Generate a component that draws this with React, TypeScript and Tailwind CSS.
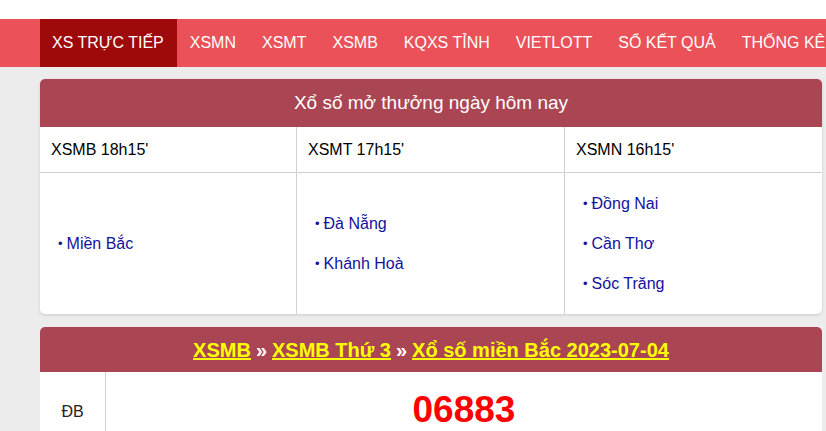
import React from 'react'

const navItems = ['XS TRỰC TIẾP', 'XSMN', 'XSMT', 'XSMB', 'KQXS TỈNH', 'VIETLOTT', 'SỔ KẾT QUẢ', 'THỐNG KÊ']

const schedule = [
  { title: "XSMB 18h15'", items: ['Miền Bắc'] },
  { title: "XSMT 17h15'", items: ['Đà Nẵng', 'Khánh Hoà'] },
  { title: "XSMN 16h15'", items: ['Đồng Nai', 'Cần Thơ', 'Sóc Trăng'] },
]

export default function App() {
  return (
    <div className="min-h-[431px] bg-[#ececec] font-['Liberation_Sans',Arial,sans-serif] overflow-hidden">
      {/* thanh trên cùng */}
      <div className="h-[19px] bg-white" />

      {/* menu */}
      <nav className="h-12 bg-[#ea5159] pl-10 flex whitespace-nowrap overflow-hidden">
        {navItems.map((item, i) => (
          <a
            key={item}
            href="#"
            className={`flex items-center px-[13px] text-base text-white ${i === 0 ? 'bg-[#9e0a0a] pl-3' : ''}`}
          >
            {item}
          </a>
        ))}
      </nav>

      <div className="pl-10 pr-1 pt-3">
        {/* lịch mở thưởng hôm nay */}
        <div className="bg-white rounded-[5px] overflow-hidden shadow-[0_1px_3px_rgba(0,0,0,0.15)]">
          <div className="h-12 bg-[#aa4553] text-white text-[19px] flex items-center justify-center">
            Xổ số mở thưởng ngày hôm nay
          </div>
          <div className="grid grid-cols-[256px_268px_1fr]">
            {schedule.map((col, i) => (
              <div
                key={col.title}
                className={`h-[46px] flex items-center px-[11px] text-base text-black border-b border-[#d0d0d0] ${i > 0 ? 'border-l' : ''}`}
              >
                {col.title}
              </div>
            ))}
            {schedule.map((col, i) => (
              <div
                key={col.title + '-list'}
                className={`h-[141px] flex flex-col justify-center px-[18px] ${i > 0 ? 'border-l border-[#d0d0d0]' : ''}`}
              >
                {col.items.map((name) => (
                  <a key={name} href="#" className="h-10 flex items-center text-base text-[#12129c]">
                    <span className="mr-1 text-[13px]">•</span>
                    {name}
                  </a>
                ))}
              </div>
            ))}
          </div>
        </div>

        {/* kết quả xsmb */}
        <div className="mt-[13px] bg-white rounded-t-[5px] overflow-hidden">
          <div className="h-[45px] bg-[#aa4553] flex items-center justify-center text-[20px] font-bold text-white">
            <a href="#" className="text-[#ffff00] underline">XSMB</a>
            <span className="mx-[5px]">»</span>
            <a href="#" className="text-[#ffff00] underline">XSMB Thứ 3</a>
            <span className="mx-[5px]">»</span>
            <a href="#" className="text-[#ffff00] underline">Xổ số miền Bắc 2023-07-04</a>
          </div>
          <div className="grid grid-cols-[66px_1fr] h-20">
            <div className="flex items-center justify-center text-base text-[#222] border-r border-[#d0d0d0]">ĐB</div>
            <div className="flex items-center justify-center text-[37px] font-bold text-[#ff0000] -mt-1">06883</div>
          </div>
        </div>
      </div>
    </div>
  )
}
